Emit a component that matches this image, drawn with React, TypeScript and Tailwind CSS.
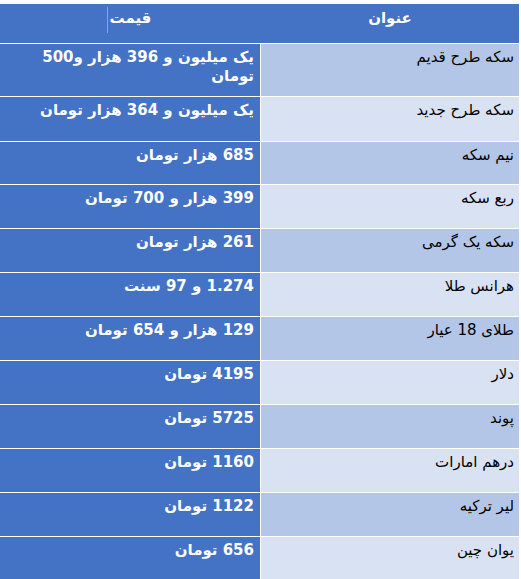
const rows = [
  { title: 'سکه طرح قدیم', price: 'یک میلیون و 396 هزار و500 تومان', h: 'h-[53px]' },
  { title: 'سکه طرح جدید', price: 'یک میلیون و 364 هزار تومان', h: 'h-[45px]' },
  { title: 'نیم سکه', price: '685 هزار تومان', h: 'h-[43px]' },
  { title: 'ربع سکه', price: '399 هزار و 700 تومان', h: 'h-[44px]' },
  { title: 'سکه یک گرمی', price: '261 هزار تومان', h: 'h-[44px]' },
  { title: 'هرانس طلا', price: '1.274 و 97 سنت', h: 'h-[44px]' },
  { title: 'طلای 18 عیار', price: '129 هزار و 654 تومان', h: 'h-[44px]' },
  { title: 'دلار', price: '4195 تومان', h: 'h-[44px]' },
  { title: 'پوند', price: '5725 تومان', h: 'h-[44px]' },
  { title: 'درهم امارات', price: '1160 تومان', h: 'h-[44px]' },
  { title: 'لیر ترکیه', price: '1122 تومان', h: 'h-[44px]' },
  { title: 'یوان چین', price: '656 تومان', h: 'h-[44px]' },
];

export default function App() {
  return (
    <div
      className="w-[521px] h-[579px] bg-white pt-[4px] overflow-hidden"
      style={{ fontFamily: '"DejaVu Sans", Tahoma, sans-serif' }}
    >
      <div dir="rtl" className="w-[519px] flex flex-col">
        <div className="flex h-[39px] bg-[#4472c4] text-white font-bold text-[15px]">
          <div className="w-[258px] flex justify-center pt-[3px]">عنوان</div>
          <div className="flex-1 flex justify-center pt-[3px]">
            <span className="relative">
              قیمت
              <span className="absolute left-[-3px] top-0 h-[26px] w-px bg-[#9aa3b5]" />
            </span>
          </div>
        </div>
        {rows.map((r, i) => (
          <div key={r.title} className={`flex border-t border-white ${r.h}`}>
            <div
              className={`w-[258px] pr-[5px] pt-[4px] text-[15px] leading-[19px] text-black ${
                i % 2 === 0 ? 'bg-[#b4c6e7]' : 'bg-[#d9e2f3]'
              }`}
            >
              {r.title}
            </div>
            <div className="flex-1 border-r border-white bg-[#4472c4] pr-[6px] pl-[20px] pt-[4px] text-[15px] leading-[19px] font-bold text-white">
              {r.price}
            </div>
          </div>
        ))}
      </div>
    </div>
  );
}
